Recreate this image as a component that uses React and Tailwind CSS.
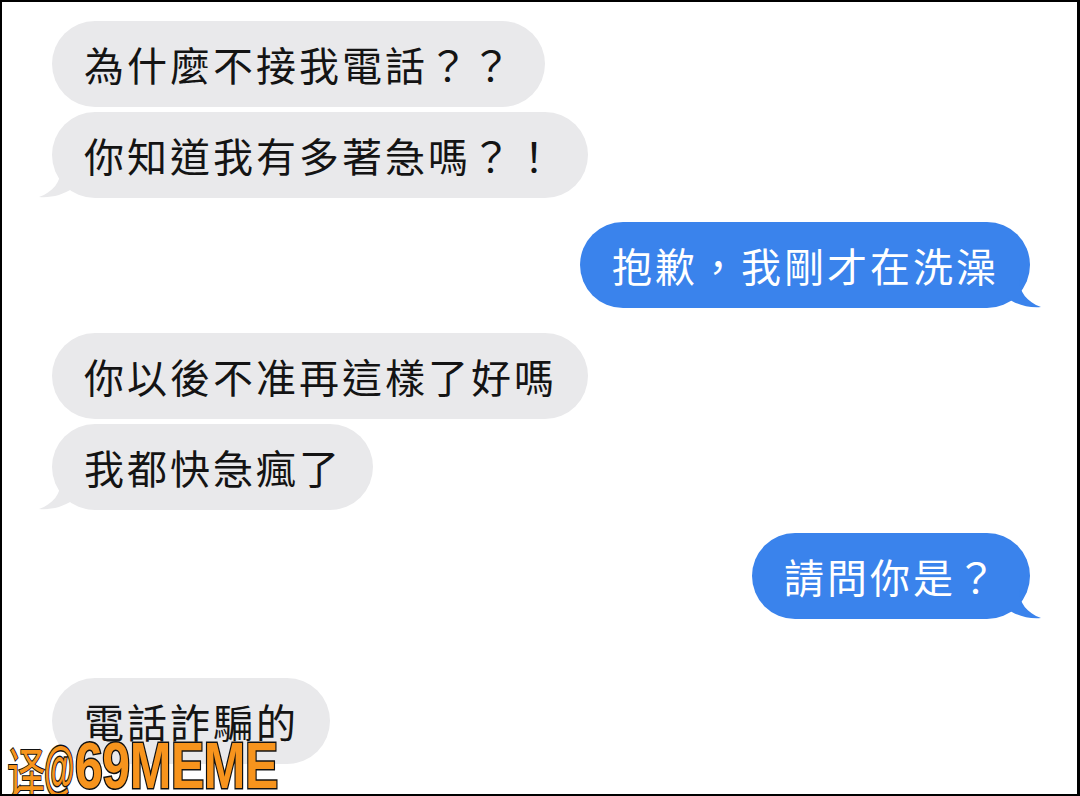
const FONT = "font-['Noto_Sans_CJK_TC','Noto_Sans_CJK_SC',sans-serif]";

function Tail({ side, color }) {
  if (side === 'left') {
    return (
      <svg
        className="absolute left-[-13px] bottom-0"
        width="34"
        height="30"
        viewBox="0 0 34 30"
      >
        <path
          d="M22 0 C22 14 14 24 0 29 C12 30 24 27 34 20 L34 0 Z"
          fill={color}
        />
      </svg>
    );
  }
  return (
    <svg
      className="absolute right-[-11px] bottom-0"
      width="34"
      height="30"
      viewBox="0 0 34 30"
    >
      <path
        d="M12 0 C12 14 20 24 34 29 C22 30 10 27 0 20 L0 0 Z"
        fill={color}
      />
    </svg>
  );
}

function Bubble({ text, me, tail, className = '' }) {
  const color = me ? '#3a83ec' : '#e9e9eb';
  return (
    <div
      className={`relative flex h-[86px] items-center rounded-[43px] pl-[32px] pr-[31px] text-[40px] leading-none tracking-[3px] ${FONT} ${
        me ? 'self-end bg-[#3a83ec] text-white' : 'self-start bg-[#e9e9eb] text-[#141414]'
      } ${className}`}
    >
      {tail && <Tail side={me ? 'right' : 'left'} color={color} />}
      <span className="relative">{text}</span>
    </div>
  );
}

export default function App() {
  return (
    <div className="relative h-[796px] w-[1080px] overflow-hidden border-t-2 border-b-2 border-l-2 border-r-[3px] border-black bg-white">
      <div className="flex flex-col pl-[50px] pr-[47px] pt-[19px]">
        <Bubble text="為什麼不接我電話？？" />
        <Bubble text="你知道我有多著急嗎？！" tail className="mt-[5px]" />
        <Bubble text="抱歉，我剛才在洗澡" me tail className="mt-[24px]" />
        <Bubble text="你以後不准再這樣了好嗎" className="mt-[25px]" />
        <Bubble text="我都快急瘋了" tail className="mt-[5px]" />
        <Bubble text="請問你是？" me tail className="mt-[23px]" />
        <Bubble text="電話詐騙的" className="mt-[59px]" />
      </div>

      {/* watermark */}
      <div className="absolute left-[5px] bottom-[-4px] flex h-[64px] items-end leading-none">
        <span
          className={`inline-block w-[37px] origin-left scale-x-[0.68] text-[56px] text-[#f7941d] ${FONT} [-webkit-text-stroke:2px_#111] [paint-order:stroke_fill]`}
        >
          译
        </span>
        <span className="inline-block w-[31px] origin-left scale-x-[0.52] font-['Liberation_Sans',sans-serif] text-[60px] font-bold text-[#f7941d] [-webkit-text-stroke:3px_#111] [paint-order:stroke_fill]">
          @
        </span>
        <span className="inline-block origin-left scale-x-[0.78] font-['Liberation_Sans',sans-serif] text-[64px] font-bold tracking-[-0.5px] text-[#f7941d] [-webkit-text-stroke:3px_#111] [paint-order:stroke_fill]">
          69MEME
        </span>
      </div>
    </div>
  );
}
